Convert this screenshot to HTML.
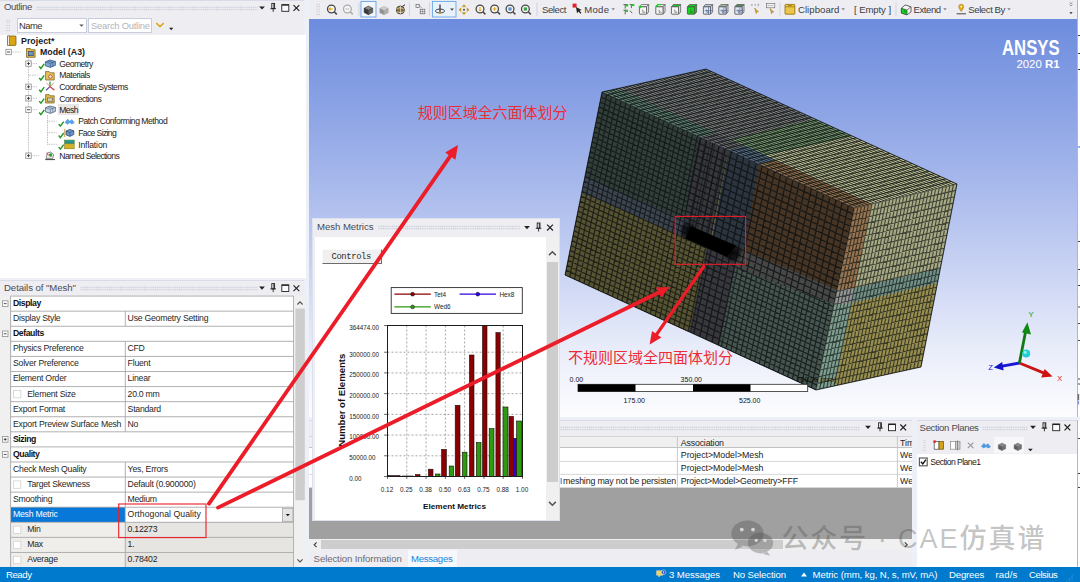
<!DOCTYPE html>
<html lang="en"><head><meta charset="utf-8"><title>Mechanical - Mesh Metrics</title>
<style>
html,body{margin:0;padding:0}
body{width:1080px;height:582px;overflow:hidden;position:relative;background:#eeeef2;font-family:"Liberation Sans","Noto Sans CJK SC",sans-serif}
.b{position:absolute;box-sizing:border-box}
.t{position:absolute;white-space:nowrap;line-height:12px;height:12px}
svg{position:absolute;left:0;top:0;overflow:visible}
.grip{position:absolute;height:5px;background-image:radial-gradient(circle,#c3c6d3 0.55px,rgba(0,0,0,0) 0.9px);background-size:2.2px 2.5px}
</style></head>
<body>
<div class="b" style="left:0px;top:0px;width:303.5px;height:15.5px;background:#eeeef2;border-top:1px solid #d9dce8"></div><span class="t" style="left:4px;top:1.25px;font-size:9.6px;color:#4a4a52;letter-spacing:-0.35px;">Outline</span><div class="grip" style="left:36px;top:5.55px;width:222px"></div>
<div class="b" style="left:303.5px;top:0px;width:5.5px;height:582px;background:#eef0f8"></div>
<div class="b" style="left:0px;top:15.5px;width:303.5px;height:19px;background:#eeeef2"></div>
<div class="grip" style="left:6px;top:19px;width:4.4px;height:12px"></div>
<div class="b" style="left:16.5px;top:17.5px;width:70.5px;height:15.5px;background:#fff;border:1px solid #c9ccdc"></div>
<span class="t" style="left:19px;top:19.6px;font-size:9.4px;color:#333;letter-spacing:-0.52px;">Name</span>
<div class="b" style="left:88px;top:17.5px;width:63.5px;height:15.5px;background:#fff;border:1px solid #c9ccdc"></div>
<span class="t" style="left:91px;top:19.8px;font-size:9.4px;color:#b4b4b8;letter-spacing:-0.23px;">Search Outline</span>
<div class="b" style="left:0px;top:34.5px;width:305.5px;height:243px;background:#fff"></div>
<div class="b" style="left:57.5px;top:104.2px;width:21.5px;height:11.2px;background:#e6e6e6"></div>
<span class="t" style="left:21px;top:34.7px;font-size:8.8px;color:#1a1a1a;font-weight:bold;letter-spacing:0.03px;">Project*</span>
<span class="t" style="left:40px;top:46.2px;font-size:8.8px;color:#1a1a1a;font-weight:bold;">Model (A3)</span>
<span class="t" style="left:59.3px;top:57.8px;font-size:8.6px;color:#1a1a1a;letter-spacing:-0.53px;">Geometry</span>
<span class="t" style="left:59.3px;top:69.4px;font-size:8.6px;color:#1a1a1a;letter-spacing:-0.49px;">Materials</span>
<span class="t" style="left:59.3px;top:81px;font-size:8.6px;color:#1a1a1a;letter-spacing:-0.49px;">Coordinate Systems</span>
<span class="t" style="left:59.3px;top:92.5px;font-size:8.6px;color:#1a1a1a;letter-spacing:-0.53px;">Connections</span>
<span class="t" style="left:59.3px;top:103.9px;font-size:8.6px;color:#1a1a1a;letter-spacing:-0.63px;">Mesh</span>
<span class="t" style="left:78.2px;top:115.4px;font-size:8.6px;color:#1a1a1a;letter-spacing:-0.47px;">Patch Conforming Method</span>
<span class="t" style="left:78.2px;top:126.9px;font-size:8.6px;color:#1a1a1a;letter-spacing:-0.63px;">Face Sizing</span>
<span class="t" style="left:78.2px;top:138.5px;font-size:8.6px;color:#1a1a1a;letter-spacing:-0.12px;">Inflation</span>
<span class="t" style="left:59.3px;top:149.9px;font-size:8.6px;color:#1a1a1a;letter-spacing:-0.62px;">Named Selections</span>
<svg width="1080" height="582" viewBox="0 0 1080 582" style="left:0px;top:0px"><path d="M11.5 52h9M28.5 57v98.5M31 63.6h6M28.5 75.2h9M31 86.8h6M31 98.3h6M31 109.7h6M31 155.7h8M47.5 115v29.3M47.5 121.2h9M47.5 132.7h9M47.5 144.3h9" stroke="#9a9a9a" stroke-width=".8" stroke-dasharray=".8 .9" fill="none"/><rect x="5.9" y="49.3" width="5.4" height="5.4" fill="#fff" stroke="#8a8a8a" stroke-width=".8"/><path d="M7.1 52h3" stroke="#222" stroke-width=".8"/><rect x="25.8" y="60.9" width="5.4" height="5.4" fill="#fff" stroke="#8a8a8a" stroke-width=".8"/><path d="M27 63.6h3" stroke="#222" stroke-width=".8"/><path d="M28.5 62.1v3" stroke="#222" stroke-width=".8"/><rect x="25.8" y="84.1" width="5.4" height="5.4" fill="#fff" stroke="#8a8a8a" stroke-width=".8"/><path d="M27 86.8h3" stroke="#222" stroke-width=".8"/><path d="M28.5 85.3v3" stroke="#222" stroke-width=".8"/><rect x="25.8" y="95.6" width="5.4" height="5.4" fill="#fff" stroke="#8a8a8a" stroke-width=".8"/><path d="M27 98.3h3" stroke="#222" stroke-width=".8"/><path d="M28.5 96.8v3" stroke="#222" stroke-width=".8"/><rect x="25.8" y="107" width="5.4" height="5.4" fill="#fff" stroke="#8a8a8a" stroke-width=".8"/><path d="M27 109.7h3" stroke="#222" stroke-width=".8"/><rect x="25.8" y="153" width="5.4" height="5.4" fill="#fff" stroke="#8a8a8a" stroke-width=".8"/><path d="M27 155.7h3" stroke="#222" stroke-width=".8"/><path d="M28.5 154.2v3" stroke="#222" stroke-width=".8"/><rect x="7.6" y="36" width="8.4" height="9.4" rx=".8" fill="#dba514" stroke="#6b5208" stroke-width=".7"/><rect x="7.600" y="36" width="1.800" height="9.400" fill="#f3efe2" stroke="#6b5208" stroke-width=".5"/><path d="M26.5 48.5h4l1 1.2h3.6v7.6h-8.6z" fill="#e3b94d" stroke="#6f5a17" stroke-width=".7"/><rect x="28.6" y="51.3" width="4.6" height="4.4" fill="#6c93c8" stroke="#2d3d5a" stroke-width=".6"/><path d="M39.2 66.4l1.700 2.100l3.300-4.600" stroke="#1c9a1c" stroke-width="1.400" fill="none"/><path d="M45.400 61.800l4.400-1.800l5.600 1.400v4l-5 2l-5-1.600z" fill="#7da7d8" stroke="#26476e" stroke-width=".7"/><path d="M45.400 61.800l5 1.600l5-2M50.400 63.400v4M47.800 60.800l5 1.600v3.800" stroke="#26476e" stroke-width=".5" fill="none"/><path d="M39.2 77.9l1.700 2.100l3.300-4.600" stroke="#1c9a1c" stroke-width="1.400" fill="none"/><path d="M45.6 71.6h3.6l1 1.2h4v7.2h-8.6z" fill="#e8c15a" stroke="#6f5a17" stroke-width=".7"/><circle cx="50.4" cy="76.6" r="1.8" fill="#e9e2cf" stroke="#b4372a" stroke-width=".7"/><path d="M39.2 89.7l1.700 2.100l3.300-4.600" stroke="#1c9a1c" stroke-width="1.400" fill="none"/><path d="M50 86.6v-5" stroke="#1a9a2a" stroke-width="1.2"/><path d="M50 86.6l4.4 3.4" stroke="#d62828" stroke-width="1.2"/><path d="M50 86.6l-4 3.6" stroke="#2853d6" stroke-width="1.2"/><path d="M46.4 83l7.4 7M53.8 83l-7.4 7" stroke="#e05a5a" stroke-width=".7"/><path d="M39.2 101.1l1.700 2.100l3.300-4.600" stroke="#1c9a1c" stroke-width="1.400" fill="none"/><path d="M45.6 94.6h3.6l1 1.2h4v7.2h-8.6z" fill="#e3b94d" stroke="#6f5a17" stroke-width=".7"/><rect x="47.6" y="98" width="4.8" height="3.2" fill="#d8d3c2" stroke="#5b5b5b" stroke-width=".6"/><path d="M39.2 112.5l1.700 2.100l3.300-4.600" stroke="#1c9a1c" stroke-width="1.400" fill="none"/><path d="M45.400 107.800l4.400-1.800l5.600 1.400v4l-5 2l-5-1.600z" fill="#c7d4e4" stroke="#39506e" stroke-width=".7"/><path d="M45.400 107.800l5 1.600l5-2M50.400 109.400v4M47.800 106.800l5 1.600v3.800" stroke="#39506e" stroke-width=".5" fill="none"/><path d="M58.7 124.1l1.700 2.100l3.300-4.600" stroke="#1c9a1c" stroke-width="1.400" fill="none"/><path d="M65 122.6l2.6-3.4l2.2 2l2.2-1.6l2.2 3.2l-2.4 1.2l-2-1.4l-2.2 1.6z" fill="#59a3ea" stroke="#3a86d6" stroke-width=".5"/><path d="M58.7 135.5l1.700 2.100l3.300-4.600" stroke="#1c9a1c" stroke-width="1.400" fill="none"/><path d="M66 131l3.8-1.6l4 1.4v3.8l-4 1.8l-3.8-1.6z" fill="#6e97c9" stroke="#233f66" stroke-width=".7"/><path d="M64.8 129v8" stroke="#c68a1a" stroke-width=".9"/><path d="M66 131l3.9 1.4l3.9-1.6M69.9 132.4v4" stroke="#233f66" stroke-width=".5" fill="none"/><path d="M58.7 147.1l1.700 2.100l3.300-4.600" stroke="#1c9a1c" stroke-width="1.400" fill="none"/><rect x="64.6" y="140" width="9.6" height="8.8" fill="#d3b324" stroke="#7b6a10" stroke-width=".5"/><rect x="64.6" y="140" width="9.6" height="3.6" fill="#2f9e8e"/><path d="M64.6 142h9.6M64.6 143.6h9.6" stroke="#176a60" stroke-width=".4"/><path d="M45.2 159.6h9.8" stroke="#444" stroke-width="1"/><path d="M46 158.4l1.4-5.6l3.4-.8l3 2.6l-1.2 3.8z" fill="#e9efe6" stroke="#4a4a4a" stroke-width=".6"/><circle cx="50.6" cy="155" r="1.7" fill="#2e9e3a"/><path d="M46.6 153.4l2 1.6" stroke="#d62828" stroke-width="1"/><path d="M259.1 6.41h5.8l-2.9 3.19z" fill="#222"/><rect x="271.8" y="3.4" width="2.800" height="5.200" fill="none" stroke="#222" stroke-width=".9"/><path d="M270.4 8.7h5.600M273.2 8.7v3.200M273.9 3.7v4.600" stroke="#222" stroke-width=".9" fill="none"/><rect x="281.8" y="4.7" width="7" height="6.600" fill="#fafafa" stroke="#222" stroke-width=".9"/><path d="M281.8 5h7" stroke="#222" stroke-width="1.3"/><path d="M293.5 5.1l5.8 5.8M299.3 5.1l-5.8 5.8" stroke="#222" stroke-width="1.2" fill="none"/><path d="M79.3 24.39h4.4l-2.2 2.42z" fill="#555"/><path d="M156.2 23l3.8 3.6l3.8-3.6" stroke="#dba514" stroke-width="1.5" fill="none"/><path d="M169.1 27.84h4.2l-2.1 2.31z" fill="#222"/></svg>
<div class="b" style="left:309px;top:0px;width:767.8px;height:19.5px;background:#eeeef2"></div>
<div class="grip" style="left:316px;top:3px;width:4.4px;height:13px"></div>
<svg width="1080" height="582" viewBox="0 0 1080 582" style="left:0px;top:0px"><circle cx="331.4" cy="9" r="3.900" fill="#f4f4f4" stroke="#474747" stroke-width="1.300"/><path d="M334.2 11.8l2.6 2.6" stroke="#474747" stroke-width="1.5"/><path d="M329.2 9h3.6M330.6 7.6l-1.6 1.4l1.6 1.4" stroke="#dba514" stroke-width="1.1" fill="none"/><circle cx="347.4" cy="9" r="3.900" fill="#f4f4f4" stroke="#ababab" stroke-width="1.300"/><path d="M350.2 11.8l2.6 2.6" stroke="#ababab" stroke-width="1.5"/><path d="M345.6 9h3.4" stroke="#b5b5b5" stroke-width=".9"/><path d="M359 2.5v14" stroke="#d2d4de" stroke-width="1"/><rect x="361" y="1.4" width="15" height="15.6" fill="#f1f6fd" stroke="#5ea3ec" stroke-width=".9"/><path d="M368.4 6.08l4.3 2.15l-4.3 2.15l-4.3 -2.15z" fill="#8c8c8c" stroke="#2a2a2a" stroke-width=".5"/><path d="M364.1 8.23l4.3 2.15v4.3l-4.3 -2.15z" fill="#3a3a3a" stroke="#2a2a2a" stroke-width=".5"/><path d="M372.7 8.23l-4.3 2.15v4.3l4.3 -2.15z" fill="#666" stroke="#2a2a2a" stroke-width=".5"/><path d="M384 6.39l4.2 2.1l-4.2 2.1l-4.2 -2.1z" fill="#cfcfcf" stroke="#a2a2a2" stroke-width=".5"/><path d="M379.8 8.49l4.2 2.1v4.2l-4.2 -2.1z" fill="#8e8e8e" stroke="#a2a2a2" stroke-width=".5"/><path d="M388.2 8.49l-4.2 2.1v4.2l4.2 -2.1z" fill="#adadad" stroke="#a2a2a2" stroke-width=".5"/><circle cx="400.4" cy="10" r="4" fill="#8a6a2a" stroke="#2e2e2e" stroke-width=".8"/><path d="M396.6 9.2q3.8-3 7.6.2M397 11.8q3.4 2 6.8-.2M400.4 6v8" stroke="#e7e3d6" stroke-width=".8" fill="none"/><path d="M402.6 6.2l2.4-1.4" stroke="#2e2e2e" stroke-width="1"/><path d="M409.5 2.5v14" stroke="#d2d4de" stroke-width="1"/><rect x="416" y="4.4" width="3.2" height="3.2" fill="none" stroke="#666" stroke-width=".7"/><rect x="420.2" y="9.2" width="4.6" height="4.6" fill="none" stroke="#666" stroke-width=".7"/><path d="M420.2 11.5h4.6M422.5 9.2v4.6M419.4 5.4l2.4 2.6" stroke="#666" stroke-width=".5"/><path d="M429.5 2.5v14" stroke="#d2d4de" stroke-width="1"/><rect x="432.4" y="1.4" width="23.6" height="15.6" fill="#e9f1fb" stroke="#66a7e8" stroke-width=".9"/><ellipse cx="440" cy="11" rx="4.6" ry="2" fill="none" stroke="#3a3a3a" stroke-width=".9"/><path d="M440 4.4v8" stroke="#2a2a2a" stroke-width="1.2"/><path d="M438.4 12.6l1.6 1.6l1.6-1.6z" fill="#dba514"/><path d="M450.1 8.55h3.8l-1.9 2.09z" fill="#444"/><path d="M464 4.6l1.8 2.2h-3.6zM464 14.8l1.8-2.2h-3.6zM458.8 9.7l2.2-1.8v3.6zM469.2 9.7l-2.2-1.8v3.6z" fill="#dba514" stroke="#a77c08" stroke-width=".4"/><circle cx="464" cy="9.7" r="1" fill="#444"/><circle cx="480" cy="9" r="3.900" fill="#f4f4f4" stroke="#474747" stroke-width="1.300"/><path d="M482.8 11.8l2.6 2.6" stroke="#474747" stroke-width="1.5"/><path d="M480 7v4M478.8 9.6l1.2 1.4l1.2-1.4" stroke="#dba514" stroke-width="1" fill="none"/><circle cx="494.6" cy="9" r="3.900" fill="#f4f4f4" stroke="#474747" stroke-width="1.300"/><path d="M497.4 11.8l2.6 2.6" stroke="#474747" stroke-width="1.5"/><path d="M492.8 9h3.6M494.6 7.2v3.6" stroke="#dba514" stroke-width="1.1"/><circle cx="510" cy="9" r="3.900" fill="#f4f4f4" stroke="#474747" stroke-width="1.300"/><path d="M512.8 11.8l2.6 2.6" stroke="#474747" stroke-width="1.5"/><rect x="508.4" y="7.4" width="3.2" height="3.2" fill="#5b8fd1"/><circle cx="525.4" cy="9" r="3.900" fill="#f4f4f4" stroke="#474747" stroke-width="1.300"/><path d="M528.2 11.8l2.6 2.6" stroke="#474747" stroke-width="1.5"/><rect x="523.8" y="7.4" width="3.2" height="3.2" fill="#3aa24a"/><path d="M537 2.5v14" stroke="#d2d4de" stroke-width="1"/><rect x="572.6" y="3.6" width="4" height="4" fill="#e8202a"/><path d="M576 7l1 6.2l1.6-1.8l1.8 2.4l1-.8l-1.8-2.4l2.2-.6z" fill="#222"/><path d="M611.4 8.21h3.6l-1.8 1.98z" fill="#7c7c84"/><path d="M623.400 4.600h4.400M629.600 4.600h4.400M623.400 10.200h4.400M625.200 4.600v4M631.400 4.600v3.600M625.200 10.200v4.200M630 10.600l2.200 2.600" stroke="#444" stroke-width=".8" fill="none"/><path d="M626 4.800h2.200v1.600h-2.200zM631.600 4.200h2.800v1.800h-2.800zM625.600 10.400h2.400v1.600h-2.400z" fill="#12d61a"/><path d="M639.4 6.8l2-2.200h7.200l-2 2.200z" fill="#f6f6f6" stroke="#4a4a4a" stroke-width=".7"/><path d="M646.6 6.8l2-2.200v7.400l-2 2.200z" fill="#f6f6f6" stroke="#4a4a4a" stroke-width=".7"/><rect x="639.4" y="6.8" width="7.200" height="7.400" rx=".6" fill="#f6f6f6" stroke="#4a4a4a" stroke-width=".8"/><path d="M642.6 9.6l.5 3l.9-.9l1.100 1.300" fill="none" stroke="#444" stroke-width=".6"/><rect x="638.800" y="5.800" width="2.400" height="2.400" fill="#12d61a"/><path d="M655.8 6.8l2-2.200h7.200l-2 2.200z" fill="#f6f6f6" stroke="#4a4a4a" stroke-width=".7"/><path d="M663 6.8l2-2.200v7.400l-2 2.200z" fill="#f6f6f6" stroke="#4a4a4a" stroke-width=".7"/><rect x="655.8" y="6.8" width="7.200" height="7.400" rx=".6" fill="#f6f6f6" stroke="#4a4a4a" stroke-width=".8"/><path d="M659 9.6l.5 3l.9-.9l1.100 1.300" fill="none" stroke="#444" stroke-width=".6"/><path d="M655.800 6.800l2-2.200h3" stroke="#12d61a" stroke-width="1.400" fill="none"/><path d="M671.4 6.8l2-2.200h7.200l-2 2.200z" fill="#12d61a" stroke="#4a4a4a" stroke-width=".7"/><path d="M678.6 6.8l2-2.200v7.400l-2 2.200z" fill="#f6f6f6" stroke="#4a4a4a" stroke-width=".7"/><rect x="671.4" y="6.8" width="7.200" height="7.400" rx=".6" fill="#f6f6f6" stroke="#4a4a4a" stroke-width=".8"/><path d="M674.6 9.6l.5 3l.9-.9l1.100 1.300" fill="none" stroke="#444" stroke-width=".6"/><path d="M687.4 6.8l2-2.200h7.200l-2 2.200z" fill="#12d61a" stroke="#4a4a4a" stroke-width=".7"/><path d="M694.6 6.8l2-2.200v7.400l-2 2.200z" fill="#12d61a" stroke="#4a4a4a" stroke-width=".7"/><rect x="687.4" y="6.8" width="7.200" height="7.400" rx=".6" fill="#12d61a" stroke="#4a4a4a" stroke-width=".8"/><path d="M690.6 9.6l.5 3l.9-.9l1.100 1.300" fill="none" stroke="#444" stroke-width=".6"/><path d="M703.4 6.8l2-2.200h7.200l-2 2.200z" fill="#bcd0ea" stroke="#4a4a4a" stroke-width=".7"/><path d="M710.6 6.8l2-2.200v7.400l-2 2.200z" fill="#dfe7f3" stroke="#4a4a4a" stroke-width=".7"/><rect x="703.4" y="6.8" width="7.200" height="7.400" rx=".6" fill="#dfe7f3" stroke="#4a4a4a" stroke-width=".8"/><path d="M706.6 9.6l.5 3l.9-.9l1.100 1.300" fill="none" stroke="#444" stroke-width=".6"/><path d="M708.5 7.2v7M704.8 10.6h7.4" stroke="#3d5f9a" stroke-width=".6"/><path d="M718.8 6.8l2-2.200h7.200l-2 2.200z" fill="#a9c6a9" stroke="#4a4a4a" stroke-width=".7"/><path d="M726 6.8l2-2.200v7.400l-2 2.200z" fill="#dfe7f3" stroke="#4a4a4a" stroke-width=".7"/><rect x="718.8" y="6.8" width="7.200" height="7.400" rx=".6" fill="#dfe7f3" stroke="#4a4a4a" stroke-width=".8"/><path d="M722 9.6l.5 3l.9-.9l1.100 1.300" fill="none" stroke="#444" stroke-width=".6"/><path d="M723.9 7.2v7M720.2 10.6h7.4" stroke="#3d5f9a" stroke-width=".6"/><path d="M734.8 6.8l2-2.200h7.200l-2 2.200z" fill="#4f8a5a" stroke="#4a4a4a" stroke-width=".7"/><path d="M742 6.8l2-2.200v7.400l-2 2.200z" fill="#dfe7f3" stroke="#4a4a4a" stroke-width=".7"/><rect x="734.8" y="6.8" width="7.200" height="7.400" rx=".6" fill="#dfe7f3" stroke="#4a4a4a" stroke-width=".8"/><path d="M738 9.6l.5 3l.9-.9l1.100 1.300" fill="none" stroke="#444" stroke-width=".6"/><path d="M739.9 7.2v7M736.2 10.6h7.4" stroke="#3d5f9a" stroke-width=".6"/><path d="M751.4 4.2l1 1.6M752.4 4.2l-1 1.6M754.6 4.2l.6.9l.6-.9M755.2 5.1v.8M757.8 4.2h1.2l-1.2 1.6h1.2" stroke="#777" stroke-width=".5" fill="none"/><path d="M754.6 8l1.6 5.6l.8-2l1.6.4z" fill="#dba514" stroke="#8a6508" stroke-width=".4"/><rect x="766.4" y="3.6" width="8.4" height="4.2" fill="#f4f4f4" stroke="#666" stroke-width=".6"/><path d="M767.6 5.6h6" stroke="#666" stroke-width=".6" stroke-dasharray="1 .6"/><path d="M770 8.4l1.6 5.4l.8-2l1.6.4z" fill="#dba514" stroke="#8a6508" stroke-width=".4"/><path d="M780 2.5v14" stroke="#d2d4de" stroke-width="1"/><rect x="785" y="4.400" width="9.800" height="9.800" rx=".6" fill="#ecc646" stroke="#8d6b0c" stroke-width=".8"/><path d="M785.400 6.800h9" stroke="#8d6b0c" stroke-width=".7"/><rect x="788" y="4.800" width="3.800" height="1.400" fill="#b98d12"/><path d="M841.4 8.21h3.6l-1.8 1.98z" fill="#7c7c84"/><path d="M896 2.5v14" stroke="#d2d4de" stroke-width="1"/><path d="M901.400 8.200l3.800-3.200l5.800 1.800v5.200l-4 2.800l-5.600-1.800z" fill="#f6f6f6" stroke="#3c3c3c" stroke-width=".8"/><path d="M901.400 8.200l5.600 1.800v4.800l-5.600-1.800z" fill="#14d21c" stroke="#3c3c3c" stroke-width=".6"/><path d="M907 10l4-3.200" stroke="#3c3c3c" stroke-width=".6"/><path d="M904.400 9.600l.6 2.600l.8-.8l.9 1" stroke="#0a5a10" stroke-width=".5" fill="none"/><path d="M943.2 8.21h3.6l-1.8 1.98z" fill="#7c7c84"/><path d="M961.200 4.200a2.500 2.500 0 0 1 2.500 2.500c0 1.800-2.500 4.800-2.500 4.800s-2.500-3-2.500-4.800a2.500 2.500 0 0 1 2.500-2.500z" fill="#e2ad18" stroke="#9c7408" stroke-width=".5"/><circle cx="961.200" cy="6.700" r=".9" fill="#fff6d8"/><path d="M956.600 13.800h9.400" stroke="#333" stroke-width=".9"/><path d="M1007.2 8.21h3.6l-1.8 1.98z" fill="#7c7c84"/><path d="M1069.6 2.4l1.4 1.2l1.4-1.2M1069.6 4.6l1.4 1.2l1.4-1.200" stroke="#666" stroke-width=".7" fill="none"/><path d="M1069.4 12.32h3.2l-1.6 1.76z" fill="#222"/></svg>
<span class="t" style="left:542px;top:4.2px;font-size:9.6px;color:#3c3c44;letter-spacing:-0.45px;">Select</span>
<span class="t" style="left:584.3px;top:4.2px;font-size:9.6px;color:#3c3c44;letter-spacing:0.25px;">Mode</span>
<span class="t" style="left:798px;top:4.2px;font-size:9.6px;color:#3c3c44;letter-spacing:0.03px;">Clipboard</span>
<span class="t" style="left:854px;top:4.2px;font-size:9.6px;color:#3c3c44;letter-spacing:-0.1px;">[ Empty ]</span>
<span class="t" style="left:913.5px;top:4.2px;font-size:9.6px;color:#3c3c44;letter-spacing:-0.45px;">Extend</span>
<span class="t" style="left:968.3px;top:4.2px;font-size:9.6px;color:#3c3c44;letter-spacing:-0.43px;">Select By</span>
<div class="b" style="left:309px;top:19.3px;width:767.8px;height:398.2px;background:linear-gradient(180deg,#6d8cde 0%,#8ba3e5 22%,#a8b9ec 42%,#c9d3f3 63%,#e9edfa 83%,#fdfdff 100%)"></div>
<div class="b" style="left:1076.6px;top:0px;width:3.4px;height:582px;background:#fff;border-left:1.3px solid #93bdea"></div>
<svg width="1080" height="582" viewBox="0 0 1080 582">
<defs>
<clipPath id="cF"><polygon points="602,92 854.5,208 816,390 565,275"/></clipPath>
<clipPath id="cT"><polygon points="706,69 957,184 854.5,208 602,92"/></clipPath>
<clipPath id="cR"><polygon points="854.5,208 957,184 921,367 816,390"/></clipPath>
<radialGradient id="fz"><stop offset="0" stop-color="#000" stop-opacity=".85"/><stop offset=".6" stop-color="#000" stop-opacity=".55"/><stop offset="1" stop-color="#000" stop-opacity="0"/></radialGradient>
</defs>
<clipPath id="cL"><polygon points="600,90 698.6,136.9 683.8,219.8 584.7,177.6 580,170"/><polygon points="584.7,177.6 683.8,219.8 692,223.5 690,239.6 581.7,192.7 578,185"/><polygon points="581.7,192.7 690,239.6 707,247 689,333 563,276 560,270"/><polygon points="735,268 835,304.3 817,392 719,346.5"/></clipPath>
<g clip-path="url(#cF)">
<polygon points="602,92 854.5,208 816,390 565,275" fill="#37373d"/>
<polygon points="728.4,149.8 758.9,164 744,250 737,246 712.5,235.5" fill="#2c343f"/>
<polygon points="758.9,164 856,209 838,290.4 744,250" fill="#463525"/>
<polygon points="744,250 838,290.4 835,304.3 735,268 737,258" fill="#474747"/>
<path d="M728.4 149.8L712 236" stroke="#6e6c48" stroke-width=".9" fill="none"/>
<path d="M682.1 128.8L644.7 311.5M688.3 131.7L650.8 314.3M694.5 134.5L656.9 317.1M700.6 137.3L663 319.9M706.8 140.1L669.2 322.7M713 143L675.3 325.5M719.1 145.8L681.4 328.3M725.3 148.6L687.5 331.1M731.4 151.5L693.7 333.9M737.6 154.3L699.8 336.8M743.7 157.1L705.9 339.6M749.9 159.9L712 342.4M756.1 162.8L718.1 345.2M762.2 165.6L724.3 348M768.4 168.4L730.4 350.8M774.5 171.3L736.5 353.6M780.7 174.1L742.6 356.4M786.8 176.9L748.7 359.2M793 179.7L754.9 362M799.1 182.6L761 364.8M805.3 185.4L767.1 367.6M811.4 188.2L773.2 370.4M817.6 191L779.3 373.2M823.7 193.9L785.4 376M829.9 196.7L791.5 378.8M836.1 199.5L797.7 381.6M842.2 202.3L803.8 384.4M848.4 205.2L809.9 387.2M854.5 208L816 390M677.8 126.8L854.5 208M676.6 133L853.2 214.1M675.3 139.1L851.9 220.2M674.1 145.2L850.6 226.3M672.8 151.3L849.3 232.4M671.6 157.4L848.1 238.5M670.3 163.6L846.8 244.6M669.1 169.7L845.5 250.7M667.8 175.8L844.2 256.8M666.5 181.9L842.9 262.8M665.3 188L841.6 268.9M664 194.1L840.3 275M662.8 200.2L839 281.1M661.5 206.3L837.8 287.1M660.3 212.4L836.5 293.2M659 218.5L835.2 299.3M657.8 224.6L833.9 305.3M656.6 230.6L832.6 311.4M655.3 236.7L831.3 317.5M654.1 242.8L830.1 323.5M652.8 248.9L828.8 329.6M651.6 255L827.5 335.6M650.3 261L826.2 341.7M649.1 267.1L824.9 347.7M647.8 273.2L823.7 353.8M646.6 279.2L822.4 359.8M645.3 285.3L821.1 365.9M644.1 291.4L819.8 371.9M642.9 297.4L818.6 377.9M641.6 303.5L817.3 384M640.4 309.5L816 390" stroke="#0b1010" stroke-opacity=".78" stroke-width="1.25" fill="none"/>
<path d="M696.8 135.5L659.2 318.2M701.3 137.6L663.7 320.2M705.8 139.7L668.2 322.3M710.3 141.8L672.7 324.3M714.8 143.8L677.2 326.4M719.3 145.9L681.6 328.4M723.8 148L686.1 330.5M728.3 150L690.6 332.5" stroke="#0b1010" stroke-opacity=".5" stroke-width="1" fill="none"/>
<polygon points="600,90 698.6,136.9 683.8,219.8 584.7,177.6 580,170" fill="#323e3a"/>
<polygon points="584.7,177.6 683.8,219.8 692,223.5 690,239.6 581.7,192.7 578,185" fill="#3c444f"/>
<polygon points="581.7,192.7 690,239.6 707,247 689,333 563,276 560,270" fill="#585432"/>
<polygon points="735,268 835,304.3 817,392 719,346.5" fill="#465550"/>
<g clip-path="url(#cL)"><path d="M602 92L565 275M606.8 94.2L569.7 277.2M611.5 96.4L574.5 279.3M616.3 98.6L579.2 281.5M621.1 100.8L584 283.7M625.9 103L588.7 285.9M630.6 105.2L593.5 288M635.4 107.3L598.2 290.2M640.2 109.5L602.9 292.4M644.9 111.7L607.7 294.6M649.7 113.9L612.4 296.7M654.5 116.1L617.2 298.9M659.2 118.3L621.9 301.1M664 120.5L626.6 303.2M668.8 122.7L631.4 305.4M673.5 124.9L636.1 307.6M678.3 127.1L640.9 309.8M683.1 129.2L645.6 311.9M687.8 131.4L650.3 314.1M692.6 133.6L655.1 316.3M697.4 135.8L659.8 318.4M702.1 138L664.5 320.6M706.9 140.2L669.3 322.8M711.7 142.4L674 324.9M716.4 144.6L678.8 327.1M721.2 146.8L683.5 329.3M726 149L688.2 331.5M730.7 151.1L693 333.6M735.5 153.3L697.7 335.8M740.3 155.5L702.4 338M745 157.7L707.2 340.1M749.8 159.9L711.9 342.3M754.5 162.1L716.6 344.5M759.3 164.3L721.4 346.6M764.1 166.5L726.1 348.8M768.8 168.6L730.8 351M773.6 170.8L735.6 353.2M778.4 173L740.3 355.3M783.1 175.2L745 357.5M787.9 177.4L749.8 359.7M792.6 179.6L754.5 361.8M797.4 181.8L759.2 364M802.2 184L764 366.2M806.9 186.1L768.7 368.3M811.7 188.3L773.4 370.5M816.4 190.5L778.2 372.7M821.2 192.7L782.9 374.8M826 194.9L787.6 377M830.7 197.1L792.4 379.2M835.5 199.3L797.1 381.3M840.2 201.4L801.8 383.5M845 203.6L806.5 385.7M849.7 205.8L811.3 387.8M854.5 208L816 390M602 92L854.5 208M601 97L853.5 212.9M600 102L852.4 217.9M599 106.9L851.4 222.8M598 111.9L850.3 227.8M597 116.9L849.3 232.7M596 121.8L848.2 237.7M595 126.8L847.2 242.6M594 131.8L846.1 247.5M593 136.7L845.1 252.5M592 141.7L844 257.4M591 146.6L843 262.3M589.9 151.6L842 267.3M588.9 156.6L840.9 272.2M587.9 161.5L839.9 277.1M586.9 166.5L838.8 282.1M585.9 171.4L837.8 287M584.9 176.4L836.8 291.9M583.9 181.3L835.7 296.8M582.9 186.3L834.7 301.7M581.9 191.2L833.6 306.7M580.9 196.1L832.6 311.6M579.9 201.1L831.6 316.5M578.9 206L830.5 321.4M577.9 211L829.5 326.3M576.9 215.9L828.4 331.2M576 220.8L827.4 336.1M575 225.8L826.4 341M574 230.7L825.3 345.9M573 235.6L824.3 350.8M572 240.6L823.2 355.7M571 245.5L822.2 360.6M570 250.4L821.2 365.5M569 255.3L820.1 370.4M568 260.2L819.1 375.3M567 265.2L818.1 380.2M566 270.1L817 385.1M565 275L816 390" stroke="#0b1010" stroke-opacity=".74" stroke-width="1.2" fill="none"/></g>
</g>
<g clip-path="url(#cT)">
<polygon points="706,69 957,184 854.5,208 602,92" fill="#808080"/>
<polygon points="730,139.4 815,119 853,136.4 765,155.3" fill="#789a70"/>
<polygon points="765,155.3 853,136.4 960,184 871.5,203.7" fill="#bec094"/>
<polygon points="600,91.1 616,87.6 716.4,133.2 700,137" fill="#648676"/>
<polygon points="700,137 716.4,133.2 745.5,146.4 729,150.3" fill="#707074"/>
<polygon points="729,150.3 745.5,146.4 775.6,160.1 759,164.1" fill="#58708a"/>
<polygon points="759,164.1 775.6,160.1 873,204.4 856,208.7" fill="#987450"/>
<path d="M706 69L602 92M711.6 71.5L607.6 94.6M717.1 74.1L613.2 97.1M722.7 76.6L618.8 99.7M728.2 79.2L624.4 102.3M733.8 81.7L629.9 104.8M739.3 84.3L635.5 107.4M744.9 86.8L641.1 110M750.5 89.4L646.7 112.5M756 91.9L652.3 115.1M761.6 94.5L657.9 117.7M767.2 97L663.5 120.3M772.7 99.6L669.1 122.8M778.3 102.1L674.7 125.4M783.9 104.7L680.3 128M789.4 107.2L685.9 130.6M795 109.8L691.5 133.1M800.6 112.3L697.1 135.7M806.1 114.9L702.7 138.3M811.7 117.4L708.3 140.9M817.3 120L713.9 143.4M822.9 122.5L719.6 146M828.4 125.1L725.2 148.6M834 127.7L730.8 151.2M839.6 130.2L736.4 153.7M845.2 132.8L742 156.3M850.8 135.3L747.6 158.9M856.3 137.9L753.2 161.5M861.9 140.4L758.8 164.1M867.5 143L764.5 166.6M873.1 145.6L770.1 169.2M878.7 148.1L775.7 171.8M884.3 150.7L781.3 174.4M889.9 153.2L786.9 177M895.4 155.8L792.6 179.5M901 158.4L798.2 182.1M906.6 160.9L803.8 184.7M912.2 163.5L809.4 187.3M917.8 166L815.1 189.9M923.4 168.6L820.7 192.5M929 171.2L826.3 195.1M934.6 173.7L832 197.6M940.2 176.3L837.6 200.2M945.8 178.9L843.2 202.8M951.4 181.4L848.9 205.4M957 184L854.5 208M706 69L957 184M702.7 69.7L953.7 184.8M699.3 70.5L950.4 185.5M696 71.2L947.2 186.3M692.7 71.9L943.9 187.1M689.3 72.7L940.6 187.8M686 73.4L937.3 188.6M682.7 74.2L934 189.4M679.3 74.9L930.7 190.2M676 75.6L927.4 190.9M672.6 76.4L924.1 191.7M669.3 77.1L920.8 192.5M665.9 77.9L917.5 193.2M662.6 78.6L914.2 194M659.2 79.3L910.9 194.8M655.9 80.1L907.6 195.6M652.5 80.8L904.3 196.3M649.2 81.6L901 197.1M645.8 82.3L897.7 197.9M642.4 83.1L894.4 198.7M639.1 83.8L891.1 199.4M635.7 84.5L887.7 200.2M632.4 85.3L884.4 201M629 86L881.1 201.8M625.6 86.8L877.8 202.5M622.3 87.5L874.5 203.3M618.9 88.3L871.1 204.1M615.5 89L867.8 204.9M612.1 89.8L864.5 205.7M608.8 90.5L861.2 206.4M605.4 91.3L857.8 207.2M602 92L854.5 208" stroke="#0b1010" stroke-opacity=".8" stroke-width="1" fill="none"/>
</g>
<g clip-path="url(#cR)">
<polygon points="854.5,208 957,184 921,367 816,390" fill="#a8aa84"/>
<polygon points="854,288.3 941,268 938,283 851,303.3" fill="#729086"/>
<polygon points="851,303.3 938,283 922,368 833,388" fill="#988e50"/>
<polygon points="854.5,208 871.5,203.7 854.5,288.2 838,290.4" fill="#987450"/>
<polygon points="838,290.4 854.5,288.2 851.5,303.2 835,304.3" fill="#969696"/>
<polygon points="835,304.3 851.5,303.2 834.3,387 816,390" fill="#7e9e90"/>
<path d="M854.5 208L816 390M858 207.2L819.6 389.2M861.5 206.4L823.2 388.4M865 205.5L826.8 387.6M868.5 204.7L830.4 386.9M872 203.9L834 386.1M875.6 203.1L837.6 385.3M879.1 202.2L841.2 384.5M882.6 201.4L844.8 383.7M886.1 200.6L848.4 382.9M889.6 199.8L852 382.1M893.2 198.9L855.6 381.3M896.7 198.1L859.2 380.5M900.2 197.3L862.8 379.7M903.8 196.5L866.5 378.9M907.3 195.6L870.1 378.2M910.8 194.8L873.7 377.4M914.4 194L877.3 376.6M917.9 193.2L880.9 375.8M921.4 192.3L884.6 375M925 191.5L888.2 374.2M928.5 190.7L891.8 373.4M932.1 189.8L895.5 372.6M935.6 189L899.1 371.8M939.2 188.2L902.8 371M942.8 187.3L906.4 370.2M946.3 186.5L910 369.4M949.9 185.7L913.7 368.6M953.4 184.8L917.3 367.8M957 184L921 367M854.5 208L957 184M853.2 214.3L955.7 190.4M851.8 220.7L954.5 196.7M850.5 227L953.2 203.1M849.1 233.4L952 209.5M847.8 239.8L950.7 215.9M846.4 246.2L949.5 222.4M845.1 252.6L948.2 228.8M843.7 259L946.9 235.3M842.4 265.4L945.6 241.7M841 271.9L944.4 248.2M839.6 278.3L943.1 254.7M838.3 284.8L941.8 261.2M836.9 291.3L940.5 267.7M835.5 297.8L939.2 274.2M834.1 304.3L938 280.8M832.8 310.8L936.7 287.3M831.4 317.3L935.4 293.9M830 323.9L934.1 300.5M828.6 330.4L932.8 307.1M827.2 337L931.5 313.7M825.8 343.6L930.2 320.3M824.4 350.2L928.9 326.9M823 356.8L927.6 333.6M821.6 363.4L926.3 340.2M820.2 370L925 346.9M818.8 376.7L923.6 353.6M817.4 383.3L922.3 360.3M816 390L921 367" stroke="#0b1010" stroke-opacity=".66" stroke-width="1.1" fill="none"/>
</g>
<path d="M602 92L706 69L957 184L921 367L816 390L565 275Z" fill="none" stroke="#101414" stroke-opacity=".75" stroke-width="1"/>
<ellipse cx="688" cy="231" rx="9" ry="11" fill="url(#fz)"/>
<ellipse cx="733" cy="253" rx="10" ry="10" fill="url(#fz)"/>
<polygon points="690.7,226.2 736,245.6 727,257 685.5,238.5" fill="#000"/>
<rect x="578" y="384.300" width="229.700" height="7.200" fill="#fff" stroke="#2a2a2a" stroke-width=".8"/><rect x="578" y="384.300" width="57.500" height="7.200" fill="#000"/><rect x="693" y="384.300" width="57.500" height="7.200" fill="#000"/><path d="M1019.4 363l-19.800 3.6" stroke="#1717d8" stroke-width="2.800"/><path d="M993.800 367.400l8.400-5.400l1.400 8.400z" fill="#1212c8"/><path d="M1019.4 363l25.400 10.4" stroke="#c81414" stroke-width="2.800"/><path d="M1052.600 376.600l-11.400 1l3.400-8.600z" fill="#d01010"/><path d="M1019.4 363l6.2-31.400" stroke="#0f7a12" stroke-width="2.800"/><path d="M1027.400 322.200l3.600 12.200l-9-1.800z" fill="#0f8a14"/><circle cx="1026.200" cy="353.4" r="4" fill="#22cfd6"/><circle cx="1025.200" cy="352.400" r="1.6" fill="#8df0f2"/></svg>
<div class="b" style="left:309px;top:417.4px;width:771px;height:2.8px;background:#eef0f8"></div>
<div class="b" style="left:309px;top:420px;width:603.2px;height:16px;background:#eeeef2;border-top:1px solid #d9dce8"></div>
<div class="grip" style="left:560px;top:425.6px;width:300px"></div>
<div class="b" style="left:309px;top:436px;width:603.2px;height:12.4px;background:#f0f0f0;border-top:1px solid #d4d4d8;border-bottom:1px solid #c2c2c2"></div>
<div class="b" style="left:309px;top:448.4px;width:603.2px;height:39.2px;background:#fff"></div>
<div class="b" style="left:309px;top:487.6px;width:603.2px;height:51.8px;background:#a0a0a0"></div>
<div class="b" style="left:309px;top:539.4px;width:603.2px;height:10.8px;background:#f0f0f0"></div>
<div class="b" style="left:321px;top:540.4px;width:462px;height:9px;background:#cdcdcd"></div>
<div class="b" style="left:309px;top:539.4px;width:12px;height:10.8px;background:#f0f0f0"></div>
<div class="b" style="left:900.2px;top:539.4px;width:12px;height:10.8px;background:#f0f0f0"></div>
<div class="b" style="left:309px;top:550.2px;width:603.2px;height:16.8px;background:#eeeef2"></div>
<div class="b" style="left:407.6px;top:550.2px;width:49px;height:16.8px;background:#f7f8fc"></div>
<span class="t" style="left:313.6px;top:553px;font-size:9.6px;color:#6a6a72;letter-spacing:-0.1px;">Selection Information</span>
<span class="t" style="left:411px;top:553px;font-size:9.6px;color:#1c84d8;letter-spacing:-0.28px;">Messages</span>
<span class="t" style="left:680.8px;top:436.6px;font-size:8.8px;color:#222;letter-spacing:-0.18px;">Association</span>
<span class="t" style="left:900px;top:436.6px;font-size:8.8px;color:#222;width:12px;overflow:hidden">Tim</span>
<span class="t" style="left:680.8px;top:449px;font-size:8.8px;color:#222;letter-spacing:-0.03px;">Project&gt;Model&gt;Mesh</span>
<span class="t" style="left:900px;top:449px;font-size:8.8px;color:#222;width:12px;overflow:hidden">Wed</span>
<span class="t" style="left:680.8px;top:462px;font-size:8.8px;color:#222;letter-spacing:-0.03px;">Project&gt;Model&gt;Mesh</span>
<span class="t" style="left:900px;top:462px;font-size:8.8px;color:#222;width:12px;overflow:hidden">Wed</span>
<span class="t" style="left:680.8px;top:475px;font-size:8.8px;color:#222;letter-spacing:-0.17px;">Project&gt;Model&gt;Geometry&gt;FFF</span>
<span class="t" style="left:900px;top:475px;font-size:8.8px;color:#222;width:12px;overflow:hidden">Wed</span>
<span class="t" style="left:563px;top:475px;font-size:8.8px;color:#222;letter-spacing:-0.16px;">meshing may not be persisten</span>
<div class="b" style="left:912.2px;top:420px;width:4.5px;height:147px;background:#eef0f8"></div>
<div class="b" style="left:916.7px;top:420px;width:160px;height:16px;background:#eeeef2;border-top:1px solid #d9dce8"></div>
<span class="t" style="left:919.6px;top:421.6px;font-size:9.6px;color:#4a4a52;letter-spacing:-0.36px;">Section Planes</span>
<div class="grip" style="left:982px;top:425.6px;width:46px"></div>
<div class="b" style="left:916.7px;top:436px;width:160px;height:18.4px;background:#eeeef2"></div>
<div class="b" style="left:916.7px;top:454.4px;width:160px;height:112.6px;background:#fff"></div>
<div class="grip" style="left:923px;top:439px;width:3.4px;height:12px"></div>
<div class="b" style="left:994.4px;top:437px;width:30px;height:16.4px;background:#f7f7f9"></div>
<span class="t" style="left:930.2px;top:456.2px;font-size:8.6px;color:#222;letter-spacing:-0.53px;">Section Plane1</span>
<svg width="1080" height="582" viewBox="0 0 1080 582" style="left:0px;top:0px"><path d="M309 461.400H912.2M309 474.400H912.2M309 487.500H912.2" stroke="#d4d4d4" stroke-width=".9"/><path d="M677.4 436V487.500M897.4 436V487.500" stroke="#c4c4c4" stroke-width=".9"/><path d="M561.2 478v6" stroke="#3b6fd0" stroke-width="1"/><path d="M865.1 425.8h5.8l-2.9 3.19z" fill="#222"/><rect x="878.6" y="422.8" width="2.800" height="5.200" fill="none" stroke="#222" stroke-width=".9"/><path d="M877.2 428.1h5.600M880 428.1v3.200M880.7 423.1v4.600" stroke="#222" stroke-width=".9" fill="none"/><rect x="888.5" y="424.1" width="7" height="6.600" fill="#fafafa" stroke="#222" stroke-width=".9"/><path d="M888.5 424.4h7" stroke="#222" stroke-width="1.3"/><path d="M900.3 424.5l5.8 5.8M906.1 424.5l-5.8 5.8" stroke="#222" stroke-width="1.2" fill="none"/><path d="M316.600 542.400l-2.400 2.400l2.400 2.400M904.800 542.400l2.400 2.400l-2.400 2.400" stroke="#444" stroke-width="1.2" fill="none"/><path d="M1030.1 425.8h5.8l-2.9 3.19z" fill="#222"/><rect x="1043" y="422.8" width="2.800" height="5.200" fill="none" stroke="#222" stroke-width=".9"/><path d="M1041.6 428.1h5.600M1044.4 428.1v3.200M1045.1 423.1v4.600" stroke="#222" stroke-width=".9" fill="none"/><rect x="1052.7" y="424.1" width="7" height="6.600" fill="#fafafa" stroke="#222" stroke-width=".9"/><path d="M1052.7 424.4h7" stroke="#222" stroke-width="1.3"/><path d="M1064.5 424.5l5.8 5.8M1070.3 424.5l-5.8 5.8" stroke="#222" stroke-width="1.2" fill="none"/><rect x="934.2" y="441.6" width="4.8" height="7.6" fill="#fff" stroke="#444" stroke-width=".7"/><rect x="939" y="441.6" width="4.6" height="7.600" fill="#d5a21c" stroke="#6b5208" stroke-width=".7"/><rect x="933.4" y="440.4" width="2.4" height="2.4" fill="#e8202a"/><rect x="950.6" y="441.6" width="4.8" height="7.6" fill="#fff" stroke="#8a8a8a" stroke-width=".7"/><rect x="955.4" y="441.6" width="4.600" height="7.600" fill="#cfcfcf" stroke="#8a8a8a" stroke-width=".7"/><path d="M957.6 440.4v10" stroke="#666" stroke-width=".7"/><path d="M967.8 442.6l5.6 5.6M973.4 442.6l-5.6 5.6" stroke="#9a9a9a" stroke-width="1.2" fill="none"/><path d="M981.4 446.400l2.400-3l2.200 2l2-1.600l2.400 3.200l-2.400 1l-2-1.400l-2.200 1.400z" fill="#4b9bea" stroke="#2f7fd2" stroke-width=".5"/><path d="M1002 443.12l3.7 1.85l-3.7 1.85l-3.7 -1.85z" fill="#8a8a8a" stroke="#6a6a6a" stroke-width=".5"/><path d="M998.3 444.97l3.7 1.85v3.7l-3.7 -1.85z" fill="#5a5a5a" stroke="#6a6a6a" stroke-width=".5"/><path d="M1005.7 444.97l-3.7 1.85v3.7l3.7 -1.85z" fill="#707070" stroke="#6a6a6a" stroke-width=".5"/><path d="M1017.8 443.12l3.7 1.85l-3.7 1.85l-3.7 -1.85z" fill="#8a8a8a" stroke="#6a6a6a" stroke-width=".5"/><path d="M1014.1 444.97l3.7 1.85v3.7l-3.7 -1.85z" fill="#5a5a5a" stroke="#6a6a6a" stroke-width=".5"/><path d="M1021.5 444.97l-3.7 1.85v3.7l3.7 -1.85z" fill="#707070" stroke="#6a6a6a" stroke-width=".5"/><path d="M1028 448.68h4.8l-2.4 2.64z" fill="#222"/><rect x="919.400" y="458" width="7.800" height="7.800" fill="#fff" stroke="#5e5e5e" stroke-width="1.200"/><path d="M920.900 461.800l1.900 2.100l3.100-4.300" stroke="#111" stroke-width="1.400" fill="none"/></svg>
<div class="b" style="left:312.4px;top:218.2px;width:247.4px;height:303px;background:#eeeef2;border:1px solid #dde1ee"></div>
<span class="t" style="left:317px;top:221px;font-size:9.6px;color:#4a4a52;letter-spacing:-0.05px;">Mesh Metrics</span>
<div class="grip" style="left:377.500px;top:225px;width:142px"></div>
<div class="b" style="left:315px;top:237px;width:231px;height:282.6px;background:#fff"></div>
<div class="b" style="left:546px;top:237px;width:12.6px;height:282.6px;background:#f0f0f0"></div>
<div class="b" style="left:547.2px;top:262.4px;width:10.6px;height:220px;background:#cdcdcd"></div>
<div class="b" style="left:322px;top:249px;width:59.8px;height:15.4px;background:#f0f0f0;border-top:1px solid #fafafa;border-left:1px solid #fafafa;border-right:1.4px solid #6c6c6c;border-bottom:1.4px solid #6c6c6c"></div>
<span class="t" style="left:331.500px;top:250.600px;font-size:8.8px;color:#2a2a2a;font-family:'Liberation Mono',monospace;letter-spacing:-.35px">Controls</span>
<svg width="1080" height="582" viewBox="0 0 1080 582" style="left:0px;top:0px"><path d="M524.1 226h5.8l-2.9 3.19z" fill="#222"/><rect x="537.2" y="223" width="2.800" height="5.200" fill="none" stroke="#222" stroke-width=".9"/><path d="M535.8 228.3h5.600M538.6 228.3v3.200M539.3 223.3v4.600" stroke="#222" stroke-width=".9" fill="none"/><path d="M547.1 224.7l5.8 5.8M552.9 224.7l-5.8 5.8" stroke="#222" stroke-width="1.2" fill="none"/><path d="M549 255.1l3.4 -3.4l3.4 3.4" stroke="#555" stroke-width="1.5" fill="none"/><path d="M549 501.9l3.4 3.4l3.4 -3.4" stroke="#555" stroke-width="1.5" fill="none"/><rect x="391.200" y="287.600" width="131.100" height="25.800" fill="#fff" stroke="#2a2a2a" stroke-width=".9"/><path d="M394.4 294.2h36.400" stroke="#8b0000" stroke-width="1.3"/><circle cx="412.6" cy="294.2" r="1.900" fill="#8b0000" stroke="#111" stroke-width=".5"/><text x="434" y="296.5" font-size="6.400" fill="#222">Tet4</text><path d="M459.6 294.2h36.400" stroke="#3300dd" stroke-width="1.3"/><circle cx="477.8" cy="294.2" r="1.900" fill="#3300dd" stroke="#111" stroke-width=".5"/><text x="499.4" y="296.5" font-size="6.400" fill="#222">Hex8</text><path d="M394.4 306.9h36.400" stroke="#2e9a10" stroke-width="1.3"/><circle cx="412.6" cy="306.9" r="1.900" fill="#2e9a10" stroke="#111" stroke-width=".5"/><text x="434" y="309.2" font-size="6.400" fill="#222">Wed6</text><path d="M406.79 325.5V476.5M426.07 325.5V476.5M445.36 325.5V476.5M464.64 325.5V476.5M483.93 325.5V476.5M503.21 325.5V476.5M387.5 455.79H522.5M387.5 435.07H522.5M387.5 414.36H522.5M387.5 393.64H522.5M387.5 372.93H522.5M387.5 352.21H522.5" stroke="#7e7e7e" stroke-width=".7" stroke-dasharray="2 2" fill="none"/><rect x="388.6" y="475.6" width="11.4" height="0.9" fill="#8b0000" stroke="#1a0a0a" stroke-width=".6"/><rect x="402.4" y="476" width="10.6" height="0.5" fill="#8b0000" stroke="#1a0a0a" stroke-width=".6"/><rect x="415.6" y="474.6" width="4.4" height="1.9" fill="#8b0000" stroke="#1a0a0a" stroke-width=".6"/><rect x="428.4" y="469.2" width="4.6" height="7.3" fill="#8b0000" stroke="#1a0a0a" stroke-width=".6"/><rect x="435.4" y="474" width="4.6" height="2.5" fill="#2e9a10" stroke="#1a0a0a" stroke-width=".6"/><rect x="441.6" y="449.4" width="4.8" height="27.1" fill="#8b0000" stroke="#1a0a0a" stroke-width=".6"/><rect x="449.2" y="466" width="4.4" height="10.5" fill="#2e9a10" stroke="#1a0a0a" stroke-width=".6"/><rect x="455.2" y="405.3" width="4.8" height="71.2" fill="#8b0000" stroke="#1a0a0a" stroke-width=".6"/><rect x="462.4" y="452.2" width="4.6" height="24.3" fill="#2e9a10" stroke="#1a0a0a" stroke-width=".6"/><rect x="469.4" y="355" width="4.6" height="121.5" fill="#8b0000" stroke="#1a0a0a" stroke-width=".6"/><rect x="476.3" y="442.5" width="4.7" height="34" fill="#2e9a10" stroke="#1a0a0a" stroke-width=".6"/><rect x="482.5" y="325.4" width="4.5" height="151.1" fill="#8b0000" stroke="#1a0a0a" stroke-width=".6"/><rect x="489.2" y="428.6" width="4.8" height="47.9" fill="#2e9a10" stroke="#1a0a0a" stroke-width=".6"/><rect x="495.9" y="332.6" width="4.3" height="143.9" fill="#8b0000" stroke="#1a0a0a" stroke-width=".6"/><rect x="503" y="407" width="5" height="69.5" fill="#2e9a10" stroke="#1a0a0a" stroke-width=".6"/><rect x="509" y="416.4" width="4.5" height="60.1" fill="#8b0000" stroke="#1a0a0a" stroke-width=".6"/><rect x="513.5" y="438.3" width="3.1" height="38.2" fill="#3300cc" stroke="#1a0a0a" stroke-width=".6"/><rect x="516.6" y="421" width="5" height="55.5" fill="#2e9a10" stroke="#1a0a0a" stroke-width=".6"/><rect x="387.5" y="325.5" width="135" height="151" fill="none" stroke="#1c1c1c" stroke-width="1"/><path d="M387.5 476.5v2.400M406.79 476.5v2.400M426.07 476.5v2.400M445.36 476.5v2.400M464.64 476.5v2.400M483.93 476.5v2.400M503.21 476.5v2.400M522.5 476.5v2.400M387.5 476.5h-3.400M387.5 455.79h-3.400M387.5 435.07h-3.400M387.5 414.36h-3.400M387.5 393.64h-3.400M387.5 372.93h-3.400M387.5 352.21h-3.400M387.5 325.5h-3.400" stroke="#222" stroke-width=".7" fill="none"/><text x="387" y="492.400" font-size="6.400" fill="#222" text-anchor="middle">0.12</text><text x="406.29" y="492.400" font-size="6.400" fill="#222" text-anchor="middle">0.25</text><text x="425.57" y="492.400" font-size="6.400" fill="#222" text-anchor="middle">0.38</text><text x="444.86" y="492.400" font-size="6.400" fill="#222" text-anchor="middle">0.50</text><text x="464.14" y="492.400" font-size="6.400" fill="#222" text-anchor="middle">0.63</text><text x="483.43" y="492.400" font-size="6.400" fill="#222" text-anchor="middle">0.75</text><text x="502.71" y="492.400" font-size="6.400" fill="#222" text-anchor="middle">0.88</text><text x="522" y="492.400" font-size="6.400" fill="#222" text-anchor="middle">1.00</text><text x="349.200" y="480.9" font-size="6.300" fill="#222">0.00</text><text x="349.200" y="460.19" font-size="6.300" fill="#222">50000.00</text><text x="349.200" y="439.47" font-size="6.300" fill="#222">100000.00</text><text x="349.200" y="418.76" font-size="6.300" fill="#222">150000.00</text><text x="349.200" y="398.04" font-size="6.300" fill="#222">200000.00</text><text x="349.200" y="377.33" font-size="6.300" fill="#222">250000.00</text><text x="349.200" y="356.61" font-size="6.300" fill="#222">300000.00</text><text x="349.200" y="329.9" font-size="6.300" fill="#222">364474.00</text><text x="454.500" y="509.200" font-size="7.800" font-weight="bold" fill="#111" text-anchor="middle" textLength="63" lengthAdjust="spacingAndGlyphs">Element Metrics</text><text transform="translate(345.400 400.200) rotate(-90)" font-size="8.800" font-weight="bold" fill="#111" text-anchor="middle" textLength="93" lengthAdjust="spacingAndGlyphs">Number of Elements</text></svg>
<div class="b" style="left:0px;top:277.5px;width:305.5px;height:3.5px;background:#eef0f6"></div>
<div class="b" style="left:0px;top:280.4px;width:303.5px;height:15.7px;background:#eeeef2;border-top:1px solid #d9dce8"></div><span class="t" style="left:4px;top:281.75px;font-size:9.6px;color:#4a4a52;letter-spacing:-0.06px;">Details of &quot;Mesh&quot;</span><div class="grip" style="left:80px;top:286.05px;width:178px"></div>
<div class="b" style="left:0px;top:296.1px;width:305.5px;height:270.9px;background:#f0f0f0"></div>
<div class="b" style="left:10.6px;top:296.1px;width:283px;height:270.9px;background:#fff"></div>
<span class="t" style="left:13px;top:297.04px;font-size:8.7px;color:#111;font-weight:bold;letter-spacing:-0.44px;">Display</span>
<span class="t" style="left:13px;top:312.12px;font-size:8.7px;color:#1f1f1f;letter-spacing:-0.21px;">Display Style</span>
<span class="t" style="left:127.6px;top:312.12px;font-size:8.7px;color:#1f1f1f;letter-spacing:-0.24px;">Use Geometry Setting</span>
<span class="t" style="left:13px;top:327.2px;font-size:8.7px;color:#111;font-weight:bold;letter-spacing:-0.43px;">Defaults</span>
<span class="t" style="left:13px;top:342.28px;font-size:8.7px;color:#1f1f1f;letter-spacing:-0.23px;">Physics Preference</span>
<span class="t" style="left:127.6px;top:342.28px;font-size:8.7px;color:#1f1f1f;letter-spacing:-0.33px;">CFD</span>
<span class="t" style="left:13px;top:357.36px;font-size:8.7px;color:#1f1f1f;letter-spacing:-0.23px;">Solver Preference</span>
<span class="t" style="left:127.6px;top:357.36px;font-size:8.7px;color:#1f1f1f;letter-spacing:-0.22px;">Fluent</span>
<span class="t" style="left:13px;top:372.44px;font-size:8.7px;color:#1f1f1f;letter-spacing:-0.24px;">Element Order</span>
<span class="t" style="left:127.6px;top:372.44px;font-size:8.7px;color:#1f1f1f;letter-spacing:-0.22px;">Linear</span>
<span class="t" style="left:27.3px;top:387.52px;font-size:8.7px;color:#1f1f1f;letter-spacing:-0.23px;">Element Size</span>
<span class="t" style="left:127.6px;top:387.52px;font-size:8.7px;color:#1f1f1f;letter-spacing:-0.27px;">20.0 mm</span>
<span class="t" style="left:13px;top:402.6px;font-size:8.7px;color:#1f1f1f;letter-spacing:-0.23px;">Export Format</span>
<span class="t" style="left:127.6px;top:402.6px;font-size:8.7px;color:#1f1f1f;letter-spacing:-0.24px;">Standard</span>
<span class="t" style="left:13px;top:417.68px;font-size:8.7px;color:#1f1f1f;letter-spacing:-0.23px;">Export Preview Surface Mesh</span>
<span class="t" style="left:127.6px;top:417.68px;font-size:8.7px;color:#1f1f1f;letter-spacing:-0.31px;">No</span>
<span class="t" style="left:13px;top:432.76px;font-size:8.7px;color:#111;font-weight:bold;letter-spacing:-0.43px;">Sizing</span>
<span class="t" style="left:13px;top:447.84px;font-size:8.7px;color:#111;font-weight:bold;letter-spacing:-0.42px;">Quality</span>
<span class="t" style="left:13px;top:462.92px;font-size:8.7px;color:#1f1f1f;letter-spacing:-0.24px;">Check Mesh Quality</span>
<span class="t" style="left:127.6px;top:462.92px;font-size:8.7px;color:#1f1f1f;letter-spacing:-0.21px;">Yes, Errors</span>
<span class="t" style="left:27.3px;top:478px;font-size:8.7px;color:#1f1f1f;letter-spacing:-0.24px;">Target Skewness</span>
<span class="t" style="left:127.6px;top:478px;font-size:8.7px;color:#1f1f1f;letter-spacing:-0.22px;">Default (0.900000)</span>
<span class="t" style="left:13px;top:493.08px;font-size:8.7px;color:#1f1f1f;letter-spacing:-0.25px;">Smoothing</span>
<span class="t" style="left:127.6px;top:493.08px;font-size:8.7px;color:#1f1f1f;letter-spacing:-0.28px;">Medium</span>
<div class="b" style="left:10.6px;top:507.22px;width:114.7px;height:15.08px;background:#0878d8"></div>
<span class="t" style="left:13px;top:508.16px;font-size:8.7px;color:#fff;letter-spacing:-0.24px;">Mesh Metric</span>
<span class="t" style="left:127.6px;top:508.16px;font-size:8.7px;color:#1f1f1f;letter-spacing:0.05px;">Orthogonal Quality</span>
<div class="b" style="left:10.6px;top:522.3px;width:114.7px;height:15.08px;background:#efeeeb"></div>
<div class="b" style="left:125.3px;top:522.3px;width:168.3px;height:15.08px;background:#e7e5e1"></div>
<span class="t" style="left:27.3px;top:523.24px;font-size:8.7px;color:#1f1f1f;letter-spacing:-0.26px;">Min</span>
<span class="t" style="left:127.6px;top:523.24px;font-size:8.7px;color:#1f1f1f;letter-spacing:-0.25px;">0.12273</span>
<div class="b" style="left:10.6px;top:537.38px;width:114.7px;height:15.08px;background:#efeeeb"></div>
<div class="b" style="left:125.3px;top:537.38px;width:168.3px;height:15.08px;background:#e7e5e1"></div>
<span class="t" style="left:27.3px;top:538.32px;font-size:8.7px;color:#1f1f1f;letter-spacing:-0.3px;">Max</span>
<span class="t" style="left:127.6px;top:538.32px;font-size:8.7px;color:#1f1f1f;letter-spacing:-0.2px;">1.</span>
<div class="b" style="left:10.6px;top:552.46px;width:114.7px;height:15.08px;background:#efeeeb"></div>
<div class="b" style="left:125.3px;top:552.46px;width:168.3px;height:15.08px;background:#e7e5e1"></div>
<span class="t" style="left:27.3px;top:553.4px;font-size:8.7px;color:#1f1f1f;letter-spacing:-0.25px;">Average</span>
<span class="t" style="left:127.6px;top:553.4px;font-size:8.7px;color:#1f1f1f;letter-spacing:-0.25px;">0.78402</span>
<svg width="1080" height="582" viewBox="0 0 1080 582" style="left:0px;top:0px"><rect x="2.4" y="300.84" width="5.6" height="5.6" fill="#fff" stroke="#8e8e8e" stroke-width=".8"/><path d="M3.8 303.64h2.8" stroke="#222" stroke-width=".8"/><rect x="2.4" y="331" width="5.6" height="5.6" fill="#fff" stroke="#8e8e8e" stroke-width=".8"/><path d="M3.8 333.8h2.8" stroke="#222" stroke-width=".8"/><rect x="13.4" y="390.42" width="7.4" height="7.4" fill="#fff" stroke="#d2d2d2" stroke-width=".8"/><rect x="2.4" y="436.56" width="5.6" height="5.6" fill="#fff" stroke="#8e8e8e" stroke-width=".8"/><path d="M3.8 439.36h2.8" stroke="#222" stroke-width=".8"/><path d="M5.2 437.96v2.8" stroke="#222" stroke-width=".8"/><rect x="2.4" y="451.64" width="5.6" height="5.6" fill="#fff" stroke="#8e8e8e" stroke-width=".8"/><path d="M3.8 454.44h2.8" stroke="#222" stroke-width=".8"/><rect x="13.4" y="480.9" width="7.4" height="7.4" fill="#fff" stroke="#d2d2d2" stroke-width=".8"/><rect x="13.4" y="526.14" width="7.4" height="7.4" fill="#fff" stroke="#d2d2d2" stroke-width=".8"/><rect x="13.4" y="541.22" width="7.4" height="7.4" fill="#fff" stroke="#d2d2d2" stroke-width=".8"/><rect x="13.4" y="556.3" width="7.4" height="7.4" fill="#fff" stroke="#d2d2d2" stroke-width=".8"/><path d="M10.6 296.1H293.6M10.6 311.18H293.6M10.6 326.26H293.6M10.6 341.34H293.6M10.6 356.42H293.6M10.6 371.5H293.6M10.6 386.58H293.6M10.6 401.66H293.6M10.6 416.74H293.6M10.6 431.82H293.6M10.6 446.9H293.6M10.6 461.98H293.6M10.6 477.06H293.6M10.6 492.14H293.6M10.6 507.22H293.6M10.6 522.3H293.6M10.6 537.38H293.6M10.6 552.46H293.6" stroke="#a8a8a8" stroke-width=".9" fill="none"/><path d="M125.3 311.18V326.26M125.3 341.34V356.42M125.3 356.42V371.5M125.3 371.5V386.58M125.3 386.58V401.66M125.3 401.66V416.74M125.3 416.74V431.82M125.3 461.98V477.06M125.3 477.06V492.14M125.3 492.14V507.22M125.3 507.22V522.3M125.3 522.3V537.38M125.3 537.38V552.46M125.3 552.46V567M10.6 296.1V567M293.6 296.1V567" stroke="#a8a8a8" stroke-width=".9" fill="none"/><rect x="282.6" y="508.22" width="10.4" height="13.08" fill="#e4e4e4" stroke="#9a9a9a" stroke-width=".7"/><path d="M285.8 513.96h4l-2 2.2z" fill="#111"/><rect x="294.2" y="296.1" width="11.3" height="270.9" fill="#f0f0f0"/><rect x="295.4" y="308.6" width="9.4" height="191.6" fill="#cdcdcd"/><path d="M297.4 304.5l2.6 -2.6l2.6 2.6" stroke="#555" stroke-width="1.2" fill="none"/><path d="M297.4 559.3l2.6 2.6l2.6 -2.6" stroke="#555" stroke-width="1.2" fill="none"/><path d="M259.1 286.6h5.8l-2.9 3.19z" fill="#222"/><rect x="271.8" y="283.6" width="2.800" height="5.200" fill="none" stroke="#222" stroke-width=".9"/><path d="M270.4 288.9h5.600M273.2 288.9v3.200M273.9 283.9v4.600" stroke="#222" stroke-width=".9" fill="none"/><rect x="281.8" y="284.9" width="7" height="6.600" fill="#fafafa" stroke="#222" stroke-width=".9"/><path d="M281.8 285.2h7" stroke="#222" stroke-width="1.3"/><path d="M293.5 285.3l5.8 5.8M299.3 285.3l-5.8 5.8" stroke="#222" stroke-width="1.2" fill="none"/></svg>
<div class="b" style="left:0px;top:567px;width:1080px;height:15px;background:#007acc"></div>
<span class="t" style="left:6px;top:568.8px;font-size:9.6px;color:#fff;letter-spacing:-0.45px;">Ready</span>
<span class="t" style="left:669px;top:568.8px;font-size:9.6px;color:#fff;letter-spacing:-0.08px;">3 Messages</span>
<span class="t" style="left:733px;top:568.8px;font-size:9.6px;color:#fff;letter-spacing:-0.12px;">No Selection</span>
<span class="t" style="left:812.5px;top:568.8px;font-size:9.6px;color:#fff;letter-spacing:-0.09px;">Metric (mm, kg, N, s, mV, mA)</span>
<span class="t" style="left:949px;top:568.8px;font-size:9.6px;color:#fff;letter-spacing:-0.18px;">Degrees</span>
<span class="t" style="left:995.5px;top:568.8px;font-size:9.6px;color:#fff;letter-spacing:0.13px;">rad/s</span>
<span class="t" style="left:1029px;top:568.8px;font-size:9.6px;color:#fff;letter-spacing:-0.43px;">Celsius</span>
<svg width="1080" height="582" viewBox="0 0 1080 582" style="left:0px;top:0px"><path d="M656.600 570.800h6.400v4.400h-2.600l-1.600 1.800v-1.800h-2.200z" fill="#f2d35a" stroke="#e8e0c0" stroke-width=".5"/><circle cx="663.600" cy="572.200" r="2.300" fill="#2b57c8" stroke="#e8e8f8" stroke-width=".5"/><path d="M663.600 571.200v2.200" stroke="#fff" stroke-width=".8"/><path d="M801 576.400l3-3.800l3 3.800z" fill="#fff"/><path d="M1073 578.600l-3.600 2.600M1073 575.600l-6.400 5.600" stroke="#6fb6e8" stroke-width=".7" stroke-dasharray="1 1"/></svg>
<svg width="1080" height="582" viewBox="0 0 1080 582" style="left:0px;top:0px"><defs><marker id="ah" viewBox="0 0 14 10" refX="12.600" refY="5" markerWidth="17.5" markerHeight="12.5" markerUnits="userSpaceOnUse" orient="auto"><path d="M0 .4L14 5L0 9.600L3.400 5z" fill="#ec1c28"/></marker></defs><path d="M1078 35.500h2M1078 53.500h2M1078 69.500h2M1078 241.500h2M1078 269.500h2M1078 285.500h2M1078 307h2M1078 323.500h2M1078 340.500h2M1078 379h2M1078 384h2M1078 438.500h2M1078 473.500h2M1078 487.500h2" stroke="#333" stroke-width=".9"/><path d="M1078.400 394v6" stroke="#6e6e6e" stroke-width="1.600"/><path d="M1078.400 400.500v4M1078 147h2" stroke="#7a9be0" stroke-width="1.400"/><rect x="675.200" y="216.400" width="70.400" height="47.900" fill="none" stroke="#ec1c28" stroke-width="1.100"/><rect x="118.700" y="504" width="87.300" height="33.600" fill="none" stroke="#ec1c28" stroke-width="1.100"/><path d="M209 503.6L451.44 154.45" stroke="#ec1c28" stroke-width="3.8" stroke-linecap="round" fill="none"/><path d="M458 145L455.39 159.63L445.21 152.55z" fill="#ec1c28"/><path d="M218 507.6L660.36 291.71" stroke="#ec1c28" stroke-width="3.8" stroke-linecap="round" fill="none"/><path d="M669.8 287.1L661.07 297.7L656.07 287.46z" fill="#ec1c28"/><path d="M703.7 266.6L655.59 335.88" stroke="#ec1c28" stroke-width="3.4" stroke-linecap="round" fill="none"/><path d="M649.6 344.5L652.05 330.98L661.41 337.48z" fill="#ec1c28"/><text x="417.800" y="117.800" font-size="15" fill="#ee2c38" textLength="149.600" lengthAdjust="spacing">规则区域全六面体划分</text><text x="568" y="362.600" font-size="15" fill="#ee2c38" textLength="165" lengthAdjust="spacing">不规则区域全四面体划分</text><g font-size="7" fill="#111"><text x="569.600" y="381.900">0.00</text><text x="680.600" y="381.900">350.00</text><text x="796.600" y="381.900" fill="#000" fill-opacity=".8">700.00 (mm)</text><text x="623.600" y="402.800">175.00</text><text x="739" y="402.800">525.00</text></g><text x="1002" y="54.800" font-size="22.400" font-weight="bold" fill="#fff" textLength="57.600" lengthAdjust="spacingAndGlyphs">ANSYS</text><text x="1016.400" y="67.800" font-size="11.800" fill="#fff" textLength="43.200" lengthAdjust="spacingAndGlyphs">2020 <tspan font-weight="bold">R1</tspan></text><g font-size="7.600"><text x="1028.600" y="317" fill="#119a16">Y</text><text x="1057.200" y="381.200" fill="#e02020">X</text><text x="988.200" y="370.200" fill="#2222e0">Z</text></g><g fill="rgba(70,70,70,.32)"><ellipse cx="747.500" cy="533.400" rx="16.200" ry="13"/><path d="M738 543.600l-3.200 6.400l8-3.600z"/><ellipse cx="760.500" cy="543" rx="12.600" ry="10.400"/><path d="M767 551.800l3.400 4l-7.800-2z"/></g><g fill="#e9e9e9" fill-opacity=".8"><circle cx="741.800" cy="529.600" r="1.900"/><circle cx="753" cy="529.600" r="1.900"/><circle cx="756.200" cy="540.400" r="1.600"/><circle cx="765" cy="540.400" r="1.600"/></g><text x="781.400" y="548.400" font-size="27" font-weight="500" fill="rgba(70,70,70,.32)" textLength="263" lengthAdjust="spacing">公众号 · CAE仿真谱</text></svg>
</body></html>
